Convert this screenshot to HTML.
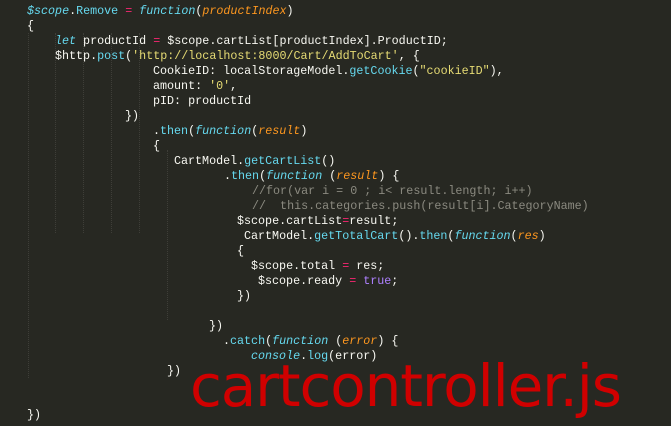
<html><head><style>
body{margin:0;width:671px;height:426px;background:#272822;overflow:hidden;position:relative;font-family:"Liberation Mono",monospace;font-size:11.7px;color:#f8f8f2}
.l{position:absolute;white-space:pre;line-height:15px}
.k{color:#66d9ef;font-style:italic}.p{color:#fd971f;font-style:italic}.s{color:#e6db74}.o{color:#f92672}.m{color:#66d9ef}.t{color:#ae81ff}.c{color:#8b8a80}
.g{position:absolute;top:33px;height:200px;border-left:1px dotted #3e3e38}
</style></head><body>
<div class="g" style="left:28px;height:345px"></div><div class="g" style="left:55px;height:200px"></div><div class="g" style="left:83px;height:200px"></div><div class="g" style="left:111px;height:200px"></div><div class="g" style="left:139px;height:200px"></div><div class="g" style="left:167px;top:150px;height:170px"></div>
<div class="l" style="left:27px;top:4px"><span class="k">$scope</span>.<span class="m">Remove</span> <span class="o">=</span> <span class="k">function</span>(<span class="p">productIndex</span>)</div>
<div class="l" style="left:27px;top:19px">{</div>
<div class="l" style="left:55px;top:34px"><span class="k">let</span> productId <span class="o">=</span> $scope.cartList[productIndex].ProductID;</div>
<div class="l" style="left:55px;top:49px">$http.<span class="m">post</span>(<span class="s">'http://localhost:8000/Cart/AddToCart'</span>, {</div>
<div class="l" style="left:153px;top:64px">CookieID: localStorageModel.<span class="m">getCookie</span>(<span class="s">"cookieID"</span>),</div>
<div class="l" style="left:153px;top:79px">amount: <span class="s">'0'</span>,</div>
<div class="l" style="left:153px;top:94px">pID: productId</div>
<div class="l" style="left:125px;top:109px">})</div>
<div class="l" style="left:153px;top:124px">.<span class="m">then</span>(<span class="k">function</span>(<span class="p">result</span>)</div>
<div class="l" style="left:153px;top:139px">{</div>
<div class="l" style="left:174px;top:154px">CartModel.<span class="m">getCartList</span>()</div>
<div class="l" style="left:224px;top:169px">.<span class="m">then</span>(<span class="k">function</span> (<span class="p">result</span>) {</div>
<div class="l c" style="left:252px;top:184px">//for(var i = 0 ; i&lt; result.length; i++)</div>
<div class="l c" style="left:252px;top:199px">//  this.categories.push(result[i].CategoryName)</div>
<div class="l" style="left:237px;top:214px">$scope.cartList<span class="o">=</span>result;</div>
<div class="l" style="left:244px;top:229px">CartModel.<span class="m">getTotalCart</span>().<span class="m">then</span>(<span class="k">function</span>(<span class="p">res</span>)</div>
<div class="l" style="left:237px;top:244px">{</div>
<div class="l" style="left:251px;top:259px">$scope.total <span class="o">=</span> res;</div>
<div class="l" style="left:258px;top:274px">$scope.ready <span class="o">=</span> <span class="t">true</span>;</div>
<div class="l" style="left:237px;top:289px">})</div>
<div class="l" style="left:209px;top:319px">})</div>
<div class="l" style="left:223px;top:334px">.<span class="m">catch</span>(<span class="k">function</span> (<span class="p">error</span>) {</div>
<div class="l" style="left:251px;top:349px"><span class="k">console</span>.<span class="m">log</span>(error)</div>
<div class="l" style="left:167px;top:364px">})</div>
<div class="l" style="left:27px;top:408px">})</div>
<svg style="position:absolute;left:0;top:0" width="671" height="426"><text x="190" y="406" font-family="DejaVu Sans,sans-serif" font-size="58" textLength="432" lengthAdjust="spacing" fill="#d00000">cartcontroller.js</text></svg>
</body></html>
